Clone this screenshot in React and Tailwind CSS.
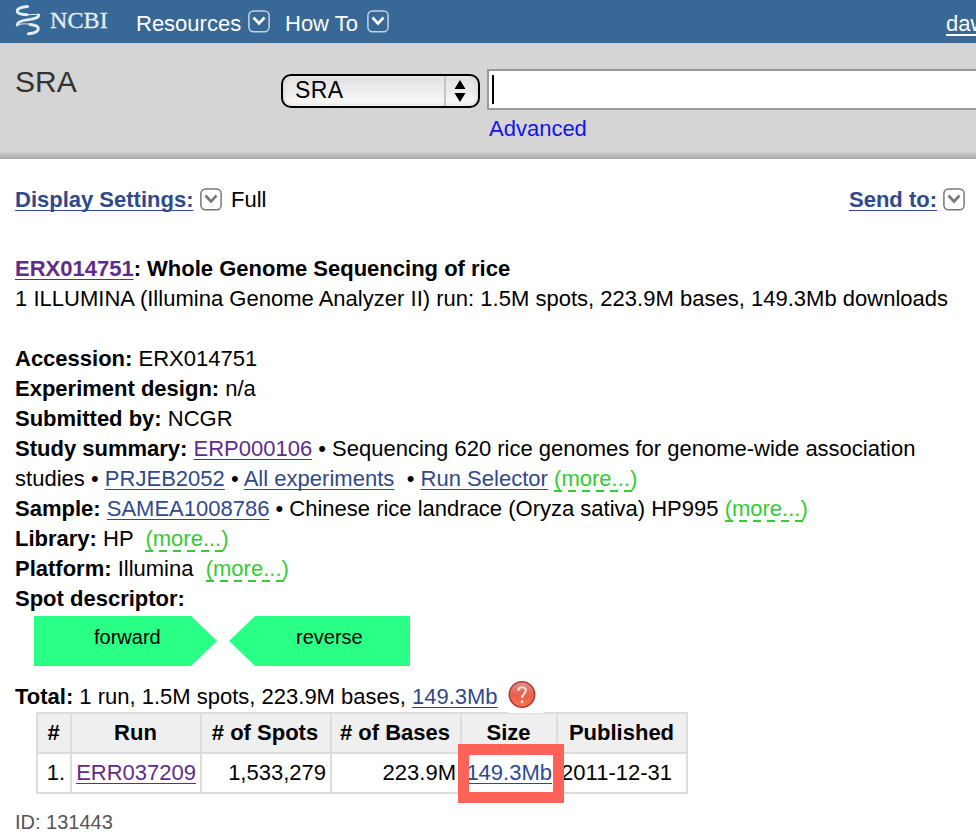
import React from 'react';

function Chevron({ className, mark = 'stroke-[#777]' }) {
  return (
    <svg className={className} width="22" height="23" viewBox="0 0 22 23" fill="none" stroke="currentColor">
      <rect x="0.9" y="1" width="20.2" height="20.800" rx="4.500" strokeWidth="1.500" />
      <path d="M5.500 7.500L11 13.500L16.500 7.500" strokeWidth="2.600" className={mark} />
    </svg>
  );
}

function Helix() {
  return (
    <svg width="26" height="31" viewBox="0 0 26 31" fill="none" stroke="#e3edf7" strokeLinecap="round">
      <path d="M12.500 1.500C7 1.800 2.200 3.500 2.200 6.300C2.200 9 7.500 9.500 12 9.700" strokeWidth="3" />
      <path d="M7 9.600C14 10 19 9.200 23.500 9.500" strokeWidth="1" />
      <path d="M23.800 9.800C23.500 14.500 15 14 8.500 15.500C4.500 16.500 2.500 17.500 2.200 20" strokeWidth="2.800" />
      <path d="M3 19.500C9 18.500 12 18.800 16 19.300" strokeWidth="1" />
      <path d="M15 19.400C20 19.800 23.300 21 23.300 23.600C23.300 26.800 18.500 28.500 13.500 28.800" strokeWidth="3" />
    </svg>
  );
}

function Link({ children, visited, className = '' }) {
  return (
    <a className={`${visited ? 'text-[#5f2c8c]' : 'text-[#2f4a8b]'} underline decoration-1 underline-offset-[3px] [text-decoration-skip-ink:none] ${className}`}>
      {children}
    </a>
  );
}

function More() {
  return (
    <a
      className="inline-block h-[26px] bg-[repeating-linear-gradient(90deg,#33cc33_0_8px,transparent_8px_14px)] bg-[length:100%_2px] bg-bottom bg-no-repeat leading-[26px] text-[#33cc33]"
    >
      (more...)
    </a>
  );
}

function Line({ children }) {
  return <div className="h-[30px] whitespace-pre">{children}</div>;
}

const th = 'border-2 border-[#dddddd] p-0 text-center font-bold';
const td = 'border-2 border-[#dddddd] p-0 text-right';

export default function App() {
  return (
    <div className="h-[840px] w-[976px] overflow-hidden bg-white font-['Liberation_Sans',Arial,sans-serif] text-[22px] leading-[30px] text-black">
      <header className="flex h-[43px] items-start overflow-hidden bg-[#376896] pl-[15px] whitespace-nowrap text-white">
        <div className="mt-[5px]"><Helix /></div>
        <span className="mt-[5px] ml-[9px] w-[86px] font-['Liberation_Serif',serif] text-[24px] tracking-[0.1px] text-[#e3edf7] [-webkit-text-stroke:0.3px_#e3edf7]">NCBI</span>
        <span className="mt-[9px] w-[105px]">Resources</span>
        <Chevron className="mt-[10px] ml-[7px] text-[#c3d3e2]" mark="stroke-white" />
        <span className="mt-[9px] ml-[15px] w-[74px]">How To</span>
        <Chevron className="mt-[10px] ml-[8px] text-[#c3d3e2]" mark="stroke-white" />
        <span className="mt-[9px] ml-auto w-[30px] overflow-hidden underline underline-offset-[3px]">daw</span>
      </header>

      <section className="flex h-[116px] items-start bg-[linear-gradient(180deg,#d5d5d5_0_108px,#a8a8a8_116px)] pl-[15px]">
        <h1 className="mt-[20px] w-[266px] text-[30px] leading-[38px] text-[#333]">SRA</h1>
        <div className="mt-[31px] flex h-[34px] w-[199px] overflow-hidden rounded-[10px] border-2 border-black bg-[linear-gradient(180deg,#fff_0,#e6e6e6_10%,#ececec_50%,#fff_100%)] shadow-[inset_0_0_6px_#ccc]">
          <span className="w-[161px] pl-[12px] text-[23px] leading-[28px] tracking-[0.4px]">SRA</span>
          <div className="flex flex-1 items-center border-l-2 border-[#c4c4c4] pl-[8px]">
            <svg width="12" height="22" viewBox="0 0 12 22">
              <path d="M6 0L11.500 9H0.500ZM0.500 13H11.500L6 22Z" />
            </svg>
          </div>
        </div>
        <div className="ml-[7px] flex-1">
          <div className="mt-[26px] flex h-[41px] items-center border-2 border-r-0 border-[#999] bg-white pl-[3px]">
            <div className="h-[29px] w-[2px] bg-black" />
          </div>
          <a className="mt-[4px] block pl-[2px] text-[#1414ee]">Advanced</a>
        </div>
      </section>

      <main className="pl-[15px]">
        <div className="flex h-[95px] items-start pt-[26px]">
          <Link className="w-[179px] font-bold">Display Settings:</Link>
          <Chevron className="mt-[3px] ml-[6px] text-[#777]" />
          <span className="ml-[9px]">Full</span>
          <Link className="ml-auto font-bold">Send to:</Link>
          <Chevron className="mt-[3px] mr-[11px] ml-[6px] text-[#777]" />
        </div>

        <Line><b><Link visited>ERX014751</Link>: Whole Genome Sequencing of rice</b></Line>
        <Line><span className="tracking-[0.015px]">1 ILLUMINA (Illumina Genome Analyzer II) run: 1.5M spots, 223.9M bases, 149.3Mb downloads</span></Line>
        <div className="pt-[30px]">
          <Line><b>Accession:</b> ERX014751</Line>
          <Line><b>Experiment design:</b> n/a</Line>
          <Line><b>Submitted by:</b> NCGR</Line>
          <Line><b>Study summary:</b> <Link visited>ERP000106</Link> • Sequencing 620 rice genomes for genome-wide association</Line>
          <Line><span className="tracking-[0.02px]">studies • <Link>PRJEB2052</Link> • <Link>All experiments</Link>{'  '}• <Link>Run Selector</Link> <More /></span></Line>
          <Line><b>Sample:</b> <Link>SAMEA1008786</Link> • Chinese rice landrace (Oryza sativa) HP995 <More /></Line>
          <Line><b>Library:</b> HP{'  '}<More /></Line>
          <Line><b>Platform:</b> Illumina{'  '}<More /></Line>
          <Line><b>Spot descriptor:</b></Line>
        </div>

        <div className="flex gap-[12px] pt-[2px] pl-[19px] text-[20px] leading-[42px]">
          <div className="h-[50px] w-[183px] bg-[#2aff86] pl-[60px] [clip-path:polygon(0_0,157px_0,100%_50%,157px_100%,0_100%)]">forward</div>
          <div className="h-[50px] w-[181px] bg-[#2aff86] pl-[67px] [clip-path:polygon(26px_0,100%_0,100%_100%,26px_100%,0_50%)]">reverse</div>
        </div>

        <div className="mt-[16px] flex h-[30px] whitespace-pre">
          <span><b>Total:</b> 1 run, 1.5M spots, 223.9M bases, <Link>149.3Mb</Link></span>
          <svg className="-mt-[1px] ml-[10px]" width="28" height="28" viewBox="0 0 28 28">
            <defs>
              <linearGradient id="help" x1="0" y1="0" x2="0" y2="1">
                <stop offset="0" stopColor="#e0968c" />
                <stop offset="0.5" stopColor="#e8604c" />
                <stop offset="1" stopColor="#ff7048" />
              </linearGradient>
            </defs>
            <circle cx="14" cy="13.500" r="12.700" fill="url(#help)" stroke="#b03a36" strokeWidth="1.600" />
            <path d="M10.300 9.800C10.300 5 17.800 5 17.800 9.500C17.800 13 14 13 14 17" fill="none" stroke="#ffe6dc" strokeWidth="2" />
            <circle cx="14" cy="20.800" r="1.500" fill="#ffe6dc" />
          </svg>
        </div>

        <div className="relative ml-[21px] w-[652px]">
          <table className="w-[652px] table-fixed border-collapse">
            <colgroup>
              <col className="w-[34px]" />
              <col className="w-[130px]" />
              <col className="w-[130px]" />
              <col className="w-[130px]" />
              <col className="w-[96px]" />
              <col className="w-[130px]" />
            </colgroup>
            <thead>
              <tr className="h-[40px] bg-[#efefef]">
                <th className={`${th} pr-[1px]`}>#</th>
                <th className={`${th} pr-[1px]`}>Run</th>
                <th className={`${th} pr-[2px]`}># of Spots</th>
                <th className={`${th} pr-[2px]`}># of Bases</th>
                <th className={`${th} pr-[1px]`}>Size</th>
                <th className={`${th} pr-[1px]`}>Published</th>
              </tr>
            </thead>
            <tbody>
              <tr className="h-[40px]">
                <td className={`${td} pr-[5px]`}>1.</td>
                <td className={`${td} pr-[4px]`}><Link visited>ERR037209</Link></td>
                <td className={`${td} pr-[4px]`}>1,533,279</td>
                <td className={`${td} pr-[4px]`}>223.9M</td>
                <td className={`${td} pr-[4px]`}><Link>149.3Mb</Link></td>
                <td className={`${td} pr-[14px]`}>2011-12-31</td>
              </tr>
            </tbody>
          </table>
          <div className="absolute top-0 left-[472px] h-[1px] w-[36px] bg-white" />
          <div className="absolute top-[32px] left-[422px] h-[59px] w-[106px] border-[11px] border-[#ff6358]" />
        </div>
        <p className="mt-[13px] text-[20px] leading-[30px] text-[#555]">ID: 131443</p>
      </main>
    </div>
  );
}
